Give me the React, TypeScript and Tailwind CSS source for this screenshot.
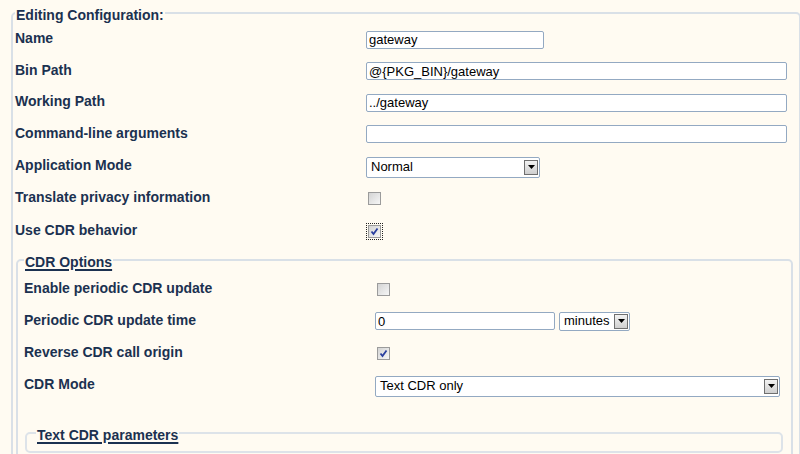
import React from "react";

const labelCls = "mb-[2px] w-[351px] shrink-0 text-[14px] font-bold text-[#1b3150]";

function Row({ label, h, children }: { label: string; h: string; children?: React.ReactNode }) {
  return (
    <div className={`flex items-center ${h}`}>
      <div className={labelCls}>{label}</div>
      {children}
    </div>
  );
}

function TextField({ value, className }: { value: string; className: string }) {
  return (
    <input
      readOnly
      value={value}
      className={`rounded-[2px] border border-[#93a9c2] bg-white px-[2px] text-[13px] leading-none text-black outline-none ${className}`}
    />
  );
}

function DropButton() {
  return (
    <span className="flex h-[15px] w-[14px] items-center justify-center border border-[#6f6f6f] bg-gradient-to-b from-[#f2f2f2] to-[#cfcfcf]">
      <svg width="7" height="4" viewBox="0 0 7 4">
        <path d="M0 0h7L3.5 4z" fill="#000" />
      </svg>
    </span>
  );
}

function Select({ value, className }: { value: string; className: string }) {
  return (
    <div
      className={`flex items-center justify-between rounded-[2px] border border-[#93a9c2] bg-white pl-[4px] pr-[1px] text-[13px] text-black ${className}`}
    >
      <span>{value}</span>
      <DropButton />
    </div>
  );
}

function Checkbox({ checked, focused }: { checked?: boolean; focused?: boolean }) {
  const box = (
    <span className="flex h-[13px] w-[13px] items-center justify-center border border-[#9b9b9b] bg-gradient-to-br from-[#d4d4d4] to-[#f6f6f6]">
      {checked && (
        <svg width="9" height="9" viewBox="0 0 9 9">
          <path d="M1.5 4.5 3.5 7 7.5 1.5" fill="none" stroke="#2a3f9e" strokeWidth="1.8" />
        </svg>
      )}
    </span>
  );
  if (focused) {
    return (
      <span className="flex h-[17px] w-[17px] items-center justify-center border border-dotted border-[#222]">
        {box}
      </span>
    );
  }
  return <span className="ml-[2px]">{box}</span>;
}

export default function App() {
  return (
    <div className="min-h-screen bg-[#fffbf2] pl-[11px] pr-[3px] pt-[4px] font-['Liberation_Sans',Arial,sans-serif]">
      <fieldset className="rounded-[5px] border-2 border-[#d9e0e7] pb-[60px] pl-[2px] pr-[6px] pt-[2px]">
        <legend className="px-[1px] text-[14px] font-bold leading-[18px] text-[#1b3150]">
          <span className="relative top-[2px]">Editing Configuration:</span>
        </legend>

        <Row label="Name" h="h-[31px]">
          <TextField value="gateway" className="h-[18px] w-[178px]" />
        </Row>
        <Row label="Bin Path" h="h-[32px]">
          <TextField value="@{PKG_BIN}/gateway" className="h-[18px] w-[421px]" />
        </Row>
        <Row label="Working Path" h="h-[31px]">
          <TextField value="../gateway" className="h-[18px] w-[421px]" />
        </Row>
        <Row label="Command-line arguments" h="h-[32px]">
          <TextField value="" className="h-[18px] w-[421px]" />
        </Row>
        <Row label="Application Mode" h="h-[32px]">
          <Select value="Normal" className="mt-[2px] h-[21px] w-[174px]" />
        </Row>
        <Row label="Translate privacy information" h="h-[33px]">
          <Checkbox />
        </Row>
        <Row label="Use CDR behavior" h="h-[32px]">
          <Checkbox checked focused />
        </Row>

        {/* CDR sub-options */}
        <fieldset className="ml-[1px] mt-[4px] rounded-[5px] border-2 border-[#d9e0e7] pb-[40px] pl-[6px] pr-[8px] pt-[5px]">
          <legend className="px-[1px] text-[14px] font-bold leading-[18px] text-[#1b3150]">
            <span className="relative top-[2px] underline decoration-2 underline-offset-[2px]">CDR Options</span>
          </legend>

          <Row label="Enable periodic CDR update" h="h-[31px]">
            <Checkbox />
          </Row>
          <Row label="Periodic CDR update time" h="h-[32px]">
            <TextField value="0" className="h-[18px] w-[180px]" />
            <Select value="minutes" className="ml-[4px] h-[19px] w-[71px]" />
          </Row>
          <Row label="Reverse CDR call origin" h="h-[32px]">
            <Checkbox checked />
          </Row>
          <Row label="CDR Mode" h="h-[32px]">
            <Select value="Text CDR only" className="mt-[2px] h-[21px] w-[405px]" />
          </Row>

          <fieldset className="ml-[1px] mt-[23px] h-[29px] w-[758px] rounded-[5px] border-2 border-[#dde3e9] pl-[9px]">
            <legend className="px-[1px] text-[14px] font-bold leading-[18px] text-[#1b3150]">
              <span className="relative top-[2px] underline decoration-2 underline-offset-[2px]">
                Text CDR parameters
              </span>
            </legend>
          </fieldset>
        </fieldset>
      </fieldset>
    </div>
  );
}
